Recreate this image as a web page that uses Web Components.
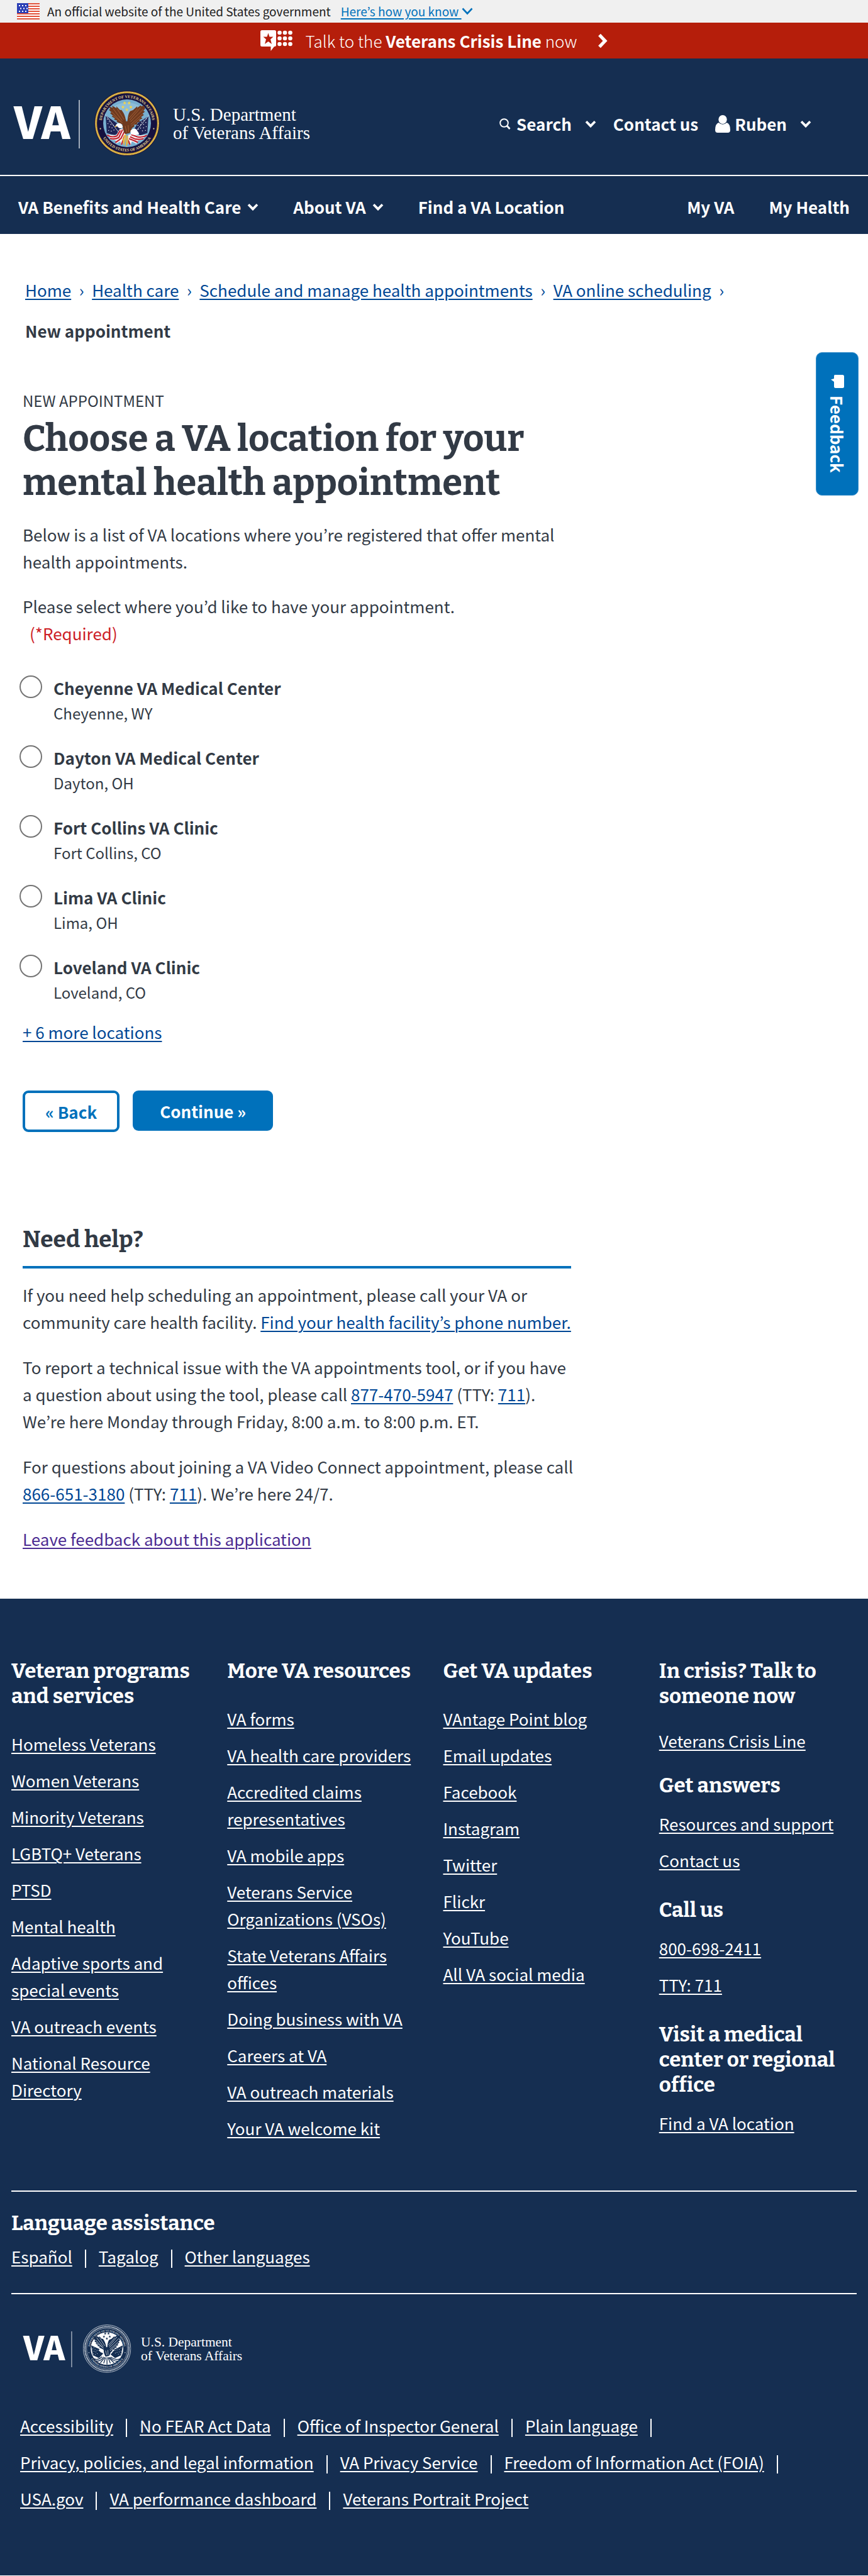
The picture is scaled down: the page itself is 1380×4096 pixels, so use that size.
<!DOCTYPE html>
<html lang="en">
<head>
<meta charset="utf-8">
<meta name="viewport" content="width=device-width, initial-scale=1">
<title>Choose a VA location for your mental health appointment</title>
<style>
  html { background: #fff; }
  body {
    margin: 0;
    --navy: #152e51;
    --blue: #0071bb;
    --link: #004795;
    --ink: #323a45;
    --serif: Bitter, "DejaVu Serif Condensed", "DejaVu Serif", serif;
    font-family: "Noto Sans CJK KR", "Noto Sans", sans-serif;
    font-size: 26px;
    line-height: 43px;
    color: var(--ink);
  }
</style>
</head>
<body>
<va-official-banner></va-official-banner>
<va-crisis-bar></va-crisis-bar>
<va-header></va-header>
<va-nav></va-nav>

<main>
  <va-breadcrumbs>
    <a href="#home">Home</a>
    <a href="#health-care">Health care</a>
    <a href="#schedule">Schedule and manage health appointments</a>
    <a href="#online">VA online scheduling</a>
    <strong>New appointment</strong>
  </va-breadcrumbs>

  <va-page>
    <va-title eyebrow="New appointment">Choose a VA location for your mental health appointment</va-title>
    <va-location-form></va-location-form>
    <va-need-help></va-need-help>
  </va-page>
</main>

<va-footer></va-footer>
<va-feedback></va-feedback>

<script>
const define = (name, html) => {
  const template = document.createElement('template');
  template.innerHTML = html;
  customElements.define(name, class extends HTMLElement {
    constructor() {
      super();
      this.attachShadow({ mode: 'open' }).append(template.content.cloneNode(true));
    }
    connectedCallback() {
      for (const name of this.getAttributeNames()) {
        const out = this.shadowRoot.querySelector(`[data-text="${name}"]`);
        if (out) out.textContent = this.getAttribute(name);
      }
    }
  });
};

const LINK = `
  a { color: inherit; text-decoration: underline; text-decoration-thickness: 2px; text-underline-offset: 3px; }
`;

/* ---------- icons ---------- */
define('va-chevron', `
<style>:host { display: inline-flex; } svg { width: 18px; height: 12px; }</style>
<svg viewBox="0 0 18 12" aria-hidden="true"><path d="M2 2.2 9 9.4 16 2.2" fill="none" stroke="currentColor" stroke-width="3.8"/></svg>
`);

/* ---------- logo: wordmark, rule and department seal ---------- */
const rope = (color, r, w, dash) =>
  `<circle cx="174" cy="174" r="${r}" fill="none" stroke="${color}" stroke-width="${w}" ${dash ? `stroke-dasharray="${dash}"` : ''}/>`;

const ringText = (fill, size, r) => `
  <path id="top" d="M${174 - r} 174 A${r} ${r} 0 0 1 ${174 + r} 174" fill="none"/>
  <path id="bottom" d="M${174 - r - 15} 174 A${r + 15} ${r + 15} 0 0 0 ${174 + r + 15} 174" fill="none"/>
  <g fill="${fill}" font-family="Liberation Serif, serif" font-weight="700" font-size="${size}" text-anchor="middle">
    <text><textPath href="#top" startOffset="50%">DEPARTMENT OF VETERANS AFFAIRS</textPath></text>
    <text><textPath href="#bottom" startOffset="50%">UNITED STATES OF AMERICA</textPath></text>
  </g>
  <circle cx="${174 - r - 7}" cy="203" r="3.5" fill="${fill}"/><circle cx="${174 + r + 7}" cy="203" r="3.5" fill="${fill}"/>`;

const star = (x, y, r) => {
  let p = '';
  for (let i = 0; i < 10; i++) {
    const a = -Math.PI / 2 + i * Math.PI / 5, q = i % 2 ? r * .42 : r;
    p += `${(x + q * Math.cos(a)).toFixed(1)},${(y + q * Math.sin(a)).toFixed(1)} `;
  }
  return `<polygon points="${p}"/>`;
};
const stars = [[161, 66], [185, 66], [152, 88], [194, 88], [173, 102]].map(s => star(s[0], s[1], 10)).join('');
const dots = pts => pts.map(p => `<circle cx="${p[0]}" cy="${p[1]}" r="2.4"/>`).join('');
const canton = dots([[70,152],[80,166],[72,176],[88,180],[80,194],[94,198],[102,186],[76,212],[90,216],[104,210],
  [276,150],[264,158],[252,168],[274,170],[262,180],[246,182],[276,192],[262,198],[246,200],[232,186],[272,212],[256,214],[234,206]]);

const wings = `
  <path d="M76 84 98 92 94 80 118 94 117 84 137 104 144 103C156 118 164 134 168 160L168 192 140 176 128 171 118 166 122 160 104 154 110 148 92 138 99 134 83 120 91 116 77 102 85 99Z"/>
  <path d="M264 80 248 84 248 78 228 92 228 84 206 104 190 110C180 124 178 142 176 162L176 206 198 202 214 190 210 182 232 180 226 172 246 164 238 157 256 148 248 141 264 130 256 124 269 112 261 108 270 96Z"/>
  <path d="M150 176C160 160 186 158 196 176 204 196 198 214 188 226L164 232C154 216 148 196 150 176Z"/>`;
const feathers = `
  <path d="M100 96 148 160M122 98 158 154M92 112 142 166M98 132 150 172M246 90 188 158M230 96 184 148M260 100 192 166M254 126 194 180M244 146 196 190M164 188 172 222M180 184 182 220"/>`;

const colourSeal = `
  <circle cx="174" cy="174" r="174" fill="#1b1a45"/>
  ${rope('#c79a2c', 165, 10)}${rope('#f7d878', 166, 5, '4 4')}
  <circle cx="174" cy="174" r="158" fill="#16113f"/>
  <circle cx="174" cy="174" r="127" fill="#78afd0"/>
  <ellipse cx="174" cy="110" rx="82" ry="46" fill="#a4cce0" opacity=".5"/>
  ${ringText('#e9d593', 21, 135)}
  <path d="M60 132 66 226 104 238 152 214 118 172Z" fill="#1f2456"/>
  <path d="M288 136 282 226 244 238 204 218 232 172Z" fill="#1f2456"/>
  <path d="M58 128 160 262M290 132 184 262" stroke="#d9dfe6" stroke-width="3"/>
  <g fill="#fff">${canton}</g>
  <path d="M66 232C88 240 98 232 116 238L134 206 156 202 168 226 162 262 144 292 138 270 118 282 112 264 92 262Z" fill="#f4f4f4"/>
  <path d="M282 232C262 242 250 234 232 240L200 230 180 236 178 262 192 292 200 270 224 284 232 266 254 262Z" fill="#f4f4f4"/>
  <g fill="none" stroke="#c2202e" stroke-width="7">
    <path d="M68 236Q92 252 120 242L138 212"/><path d="M84 254Q108 262 130 250L150 208"/><path d="M112 276Q132 264 142 254L160 218"/><path d="M144 288 160 242"/>
    <path d="M280 238Q256 252 228 246L196 234"/><path d="M262 256Q240 262 218 258L190 246"/><path d="M232 276Q214 266 184 256"/><path d="M190 288 180 264"/>
  </g>
  <g fill="#6f3a1f">${wings}</g>
  <g fill="none" stroke="#a9663a" stroke-width="3">${feathers}</g>
  <path d="M144 178C132 170 116 176 112 188L122 190C128 202 142 204 152 194Z" fill="#fff"/>
  <path d="M114 186 108 194 120 194Z" fill="#f1b93a"/>
  <path d="M192 214C204 202 216 200 222 206 230 218 236 222 238 232 222 240 206 236 194 232Z" fill="#fff"/>
  <path d="M160 236 158 290M166 234 172 296M152 252 156 280M176 240 178 284" stroke="#eab43c" stroke-width="6"/>
  <g fill="#f5d548">${stars}</g>`;

const whiteSeal = `
  ${rope('#c9d0da', 171, 4)}${rope('#e6eaef', 158, 10, '6 4')}${rope('#c9d0da', 147, 3)}
  ${ringText('#c9d0da', 19, 123)}
  <circle cx="174" cy="174" r="117" fill="#fff"/>
  <path d="M60 150 72 222 116 242 146 210 118 176ZM288 150 276 222 232 242 200 216 232 178Z" fill="#152e51"/>
  <path d="M78 122 150 196M272 124 196 202" stroke="#fff" stroke-width="12"/>
  <g fill="#fff">${canton}</g>
  <g fill="#152e51">${wings}</g>
  <g fill="none" stroke="#fff" stroke-width="3">${feathers}</g>
  <path d="M112 186 128 176 146 184 150 204 132 202 124 196Z" fill="#fff"/>
  <g fill="none" stroke="#152e51" stroke-width="6">
    <path d="M78 246Q110 262 138 232M96 262Q126 270 150 234M126 276 160 236M150 280 164 238M174 288V236M270 246Q238 262 202 234M252 264Q222 268 194 236M224 276 186 238M198 280 182 238"/>
  </g>
  <g fill="#152e51">${stars}</g>`;

for (const [name, seal] of [['va-logo', colourSeal], ['va-logo-white', whiteSeal]]) define(name, `
<style>:host { display: block; } a { display: block; color: #fff; } a > svg { display: block; width: 100%; overflow: visible; }</style>
<a href="#va" aria-label="VA, U.S. Department of Veterans Affairs">
<svg viewBox="0 0 476 105">
  <text x="0" y="77" fill="#fff" font-family="Noto Sans CJK KR, sans-serif" font-weight="900" font-size="70">VA</text>
  <path d="M104 15V92" stroke="#c5ccd6" stroke-width="1.6"/>
  <svg x="128" y="0" width="104" height="104" viewBox="0 0 348 348">${seal}</svg>
  <g fill="#fff" font-family="Liberation Serif, serif" font-weight="400" font-size="29">
    <text x="253" y="48">U.S. Department</text><text x="253" y="77">of Veterans Affairs</text>
  </g>
</svg></a>`);

/* ---------- top bars ---------- */
define('va-official-banner', `
<style>
  :host { display: flex; align-items: center; height: 36px; padding: 0 27px; background: #f0f0f0; color: #212121; font-size: 19px; line-height: 36px; }
  svg.flag { width: 36px; height: 26px; margin-right: 12px; }
  span { margin-right: 16px; }
  button { display: inline-flex; align-items: center; padding: 0; border: 0; background: none; color: var(--blue); font: inherit; }
  u { text-decoration-thickness: 2px; text-underline-offset: 3px; white-space: pre; }
  button svg { width: 18px; height: 12px; }
</style>
<svg class="flag" viewBox="0 0 36 26" role="img" aria-label="U.S. flag">
  <path fill="#fff" d="M0 0h36v26H0z"/>
  <path stroke="#e2523b" stroke-width="2" d="M0 1h36M0 5h36M0 9h36M0 13h36M0 17h36M0 21h36M0 25h36"/>
  <path fill="#2b3fb5" d="M0 0h18v16H0z"/>
  <path stroke="#fff" stroke-width="2" stroke-dasharray="2 3" d="M3 4h12M5 8.500h12M3 13h12"/>
</svg>
<span>An official website of the United States government</span>
<button type="button"><u>Here’s how you know </u><svg viewBox="0 0 18 12" aria-hidden="true"><path d="M1.500 1.500 9 9.500 16.500 1.500" fill="none" stroke="currentColor" stroke-width="2.600"/></svg></button>
`);

define('va-crisis-bar', `
<style>
  :host { display: block; background: #b51e0b; color: #fff; }
  button { display: flex; align-items: center; justify-content: center; width: 100%; height: 57px; padding: 0; border: 0; background: none; color: inherit; font: inherit; font-weight: 300; line-height: 57px; }
  b { font-weight: 700; }
  .badge { width: 51px; height: 33px; margin-right: 21px; }
  .arrow { width: 16px; height: 24px; margin-left: 33px; }
</style>
<button type="button">
  <svg class="badge" viewBox="0 0 51 33" aria-hidden="true">
    <path fill="#fff" d="M2.500 0H22.500Q25 0 25 2.500V23.500Q25 26 22.500 26H22L16.500 33V26H2.500Q0 26 0 23.500V2.500Q0 0 2.500 0Z"/>
    <path fill="#b51e0b" d="M12.500 4.500 14.500 10.500H20.500L16 14.500 18 22 12.500 18 7 22 9 14.500 4.500 10.500H10.500Z"/>
    <g fill="#fff"><circle cx="30.500" cy="4" r="3.300"/><circle cx="39" cy="4" r="3.300"/><circle cx="47.500" cy="4" r="3.300"/><circle cx="30.500" cy="13" r="3.300"/><circle cx="39" cy="13" r="3.300"/><circle cx="47.500" cy="13" r="3.300"/><circle cx="30.500" cy="22" r="3.300"/><circle cx="39" cy="22" r="3.300"/><circle cx="47.500" cy="22" r="3.300"/></g>
  </svg>
  <span>Talk to the <b>Veterans Crisis Line</b> now</span>
  <svg class="arrow" viewBox="0 0 16 24" aria-hidden="true"><path d="M3 2.500 12 12 3 21.500" fill="none" stroke="#fff" stroke-width="5.200"/></svg>
</button>
`);

define('va-header', `
<style>
  :host { display: flex; align-items: center; justify-content: space-between; padding: 51px 90px 29px 22px; background: var(--navy); color: #fff; border-bottom: 2px solid #fff; font-weight: 700; }
  va-logo { width: 476px; }
  div { display: flex; align-items: center; }
  button { display: flex; align-items: center; padding: 0; border: 0; background: none; color: inherit; font: inherit; }
  va-chevron { margin-left: 21px; }
  a { color: inherit; text-decoration: none; margin: 0 27px; }
  .search { width: 18px; height: 18px; margin-right: 9px; }
  .person { width: 24px; height: 28px; margin-right: 7px; }
</style>
<va-logo></va-logo>
<div>
  <button type="button"><svg class="search" viewBox="0 0 18 18" aria-hidden="true"><circle cx="7.500" cy="7.500" r="6.300" fill="none" stroke="#fff" stroke-width="2"/><path d="m12 12 4.500 5" stroke="#fff" stroke-width="2.800"/></svg>Search<va-chevron></va-chevron></button>
  <a href="#contact">Contact us</a>
  <button type="button"><svg class="person" viewBox="0 0 24 28" aria-hidden="true"><ellipse cx="12" cy="7" rx="6.700" ry="7" fill="#fff"/><path fill="#fff" d="M5.500 12Q12 17.500 18.500 12 24 14 24 23.500 24 28 20 28H4Q0 28 0 23.500 0 14 5.500 12Z"/></svg>Ruben<va-chevron></va-chevron></button>
</div>
`);

define('va-nav', `
<style>
  :host { display: block; background: var(--navy); color: #fff; font-weight: 700; }
  nav { display: flex; align-items: center; gap: 55px; padding: 27px 29px 22px; }
  button { display: flex; align-items: center; gap: 10px; padding: 0; border: 0; background: none; color: inherit; font: inherit; }
  a { color: inherit; text-decoration: none; }
  .my { margin-left: auto; }
</style>
<nav aria-label="Main">
  <button type="button">VA Benefits and Health Care<va-chevron></va-chevron></button>
  <button type="button">About VA<va-chevron></va-chevron></button>
  <a href="#find">Find a VA Location</a>
  <a class="my" href="#my-va">My VA</a>
  <a href="#my-health">My Health</a>
</nav>
`);

/* ---------- main column ---------- */
define('va-breadcrumbs', `
<style>
  :host { display: block; color: var(--link); }
  nav { display: flex; flex-wrap: wrap; row-gap: 22px; padding: 67px 36px 72px 40px; }
  ::slotted(a) { color: inherit; text-decoration: underline; text-decoration-thickness: 2px; text-underline-offset: 3px; }
  ::slotted(a)::after { content: "›"; display: inline-block; width: 33px; text-align: center; }
  ::slotted(strong) { color: var(--ink); }
</style>
<nav aria-label="Breadcrumb"><slot></slot></nav>
`);

define('va-page', `
<style>:host { display: block; max-width: 872px; padding: 0 36px 74px; }</style>
<slot></slot>
`);

define('va-title', `
<style>
  :host { display: block; }
  p { margin: 0 0 8px; font-size: 24px; line-height: 36px; text-transform: uppercase; }
  h1 { margin: 0 0 25px; font: 700 58px/70px var(--serif); }
</style>
<p data-text="eyebrow"></p>
<h1><slot></slot></h1>
`);

const locations = [
  ['Cheyenne VA Medical Center', 'Cheyenne, WY'],
  ['Dayton VA Medical Center', 'Dayton, OH'],
  ['Fort Collins VA Clinic', 'Fort Collins, CO'],
  ['Lima VA Clinic', 'Lima, OH'],
  ['Loveland VA Clinic', 'Loveland, CO']
];
define('va-location-form', `
<style>
  ${LINK}
  :host { display: block; }
  p { margin: 0 0 28px; }
  fieldset { margin: 0; padding: 0; border: 0; min-width: 0; }
  legend { padding: 0; margin-bottom: 46px; }
  .required { display: block; padding-left: 11px; color: #cd2026; }
  .options { display: grid; gap: 31px; margin-bottom: 21px; }
  .option { display: flex; gap: 18px; margin-left: -5px; }
  input { appearance: none; flex: none; width: 36px; height: 36px; margin: 0; border: 2px solid #757575; border-radius: 50%; background: #fff; }
  input:checked { background: var(--blue); box-shadow: inset 0 0 0 5px #fff; }
  label { font-size: 24px; line-height: 40px; }
  label b { display: block; font-size: 26px; }
  a { color: var(--link); }
  .actions { display: flex; align-items: flex-start; gap: 21px; margin: 72px 0 147px; }
  button { box-sizing: border-box; border: 0; border-radius: 9px; font: inherit; font-weight: 700; }
  .back { height: 66px; padding: 0 32px; border: 4px solid var(--blue); background: #fff; color: var(--blue); }
  .next { height: 64px; padding: 0 43px; background: var(--blue); color: #fff; }
</style>
<form>
  <p>Below is a list of VA locations where you’re registered that offer mental health appointments.</p>
  <fieldset>
    <legend>Please select where you’d like to have your appointment. <span class="required">(*Required)</span></legend>
    <div class="options">${locations.map(([name, city], i) => `
      <div class="option"><input type="radio" name="location" id="location-${i}"><label for="location-${i}"><b>${name}</b>${city}</label></div>`).join('')}
    </div>
  </fieldset>
  <a href="#more">+ 6 more locations</a>
  <div class="actions"><button class="back" type="button">« Back</button><button class="next" type="button">Continue »</button></div>
</form>
`);

define('va-need-help', `
<style>
  ${LINK}
  :host { display: block; }
  h2 { margin: 0 0 20px; padding-bottom: 18px; border-bottom: 4px solid var(--blue); font: 700 37px/48px var(--serif); }
  p { margin: 0 -8px 29px 0; }
  p:last-child { margin-bottom: 0; }
  a { color: var(--link); }
  a.visited { color: #4c2c92; }
</style>
<h2>Need help?</h2>
<p>If you need help scheduling an appointment, please call your VA or community care health facility. <a href="#phone">Find your health facility’s phone number.</a></p>
<p>To report a technical issue with the VA appointments tool, or if you have a question about using the tool, please call <a href="tel:8774705947">877-470-5947</a> (TTY: <a href="tel:711">711</a>). We’re here Monday through Friday, 8:00 a.m. to 8:00 p.m. ET.</p>
<p>For questions about joining a VA Video Connect appointment, please call <a href="tel:8666513180">866-651-3180</a> (TTY: <a href="tel:711">711</a>). We’re here 24/7.</p>
<p><a class="visited" href="#feedback">Leave feedback about this application</a></p>
`);

/* ---------- footer ---------- */
define('va-link-group', `
<style>
  :host { display: block; }
  h2 { margin: 0 0 var(--heading-gap, 34px); font: 700 33px/40px var(--serif); }
  div { display: grid; gap: 15px; justify-items: start; }
  ::slotted(a) { color: #fff; text-decoration: underline; text-decoration-thickness: 2px; text-underline-offset: 3px; }
</style>
<h2 data-text="heading"></h2>
<div><slot></slot></div>
`);

define('va-link-row', `
<style>
  :host { display: flex; flex-wrap: wrap; align-items: center; row-gap: 15px; }
  ::slotted(a) { color: #fff; text-decoration: underline; text-decoration-thickness: 2px; text-underline-offset: 3px; }
  ::slotted(i) { width: 2px; height: 29px; margin: 8px 20px 0; background: #fff; }
</style>
<slot></slot>
`);

const links = list => list.map(text => `<a href="#">${text}</a>`).join('');
const row = list => list.map(text => `<a href="#">${text}</a>`).join('<i></i>');
define('va-footer', `
<style>
  :host { display: block; padding: 95px 18px 101px; background: var(--navy); color: #fff; }
  .columns { display: grid; grid-template-columns: repeat(4, minmax(0, 1fr)); gap: 29px; margin-bottom: 78px; }
  .help { --heading-gap: 19px; display: grid; gap: 38px; align-content: start; }
  .crisis { display: grid; gap: 30px; }
  .crisis :first-child { --heading-gap: 29px; }
  .language { padding: 30px 0 37px; border: solid #fff; border-width: 2px 0; }
  h2 { margin: 0 0 11px; font: 700 33px/40px var(--serif); }
  va-logo-white { width: 352px; margin: 48px 19px 61px; }
  .legal { margin: 0 14px; }
</style>
<div class="columns">
  <va-link-group heading="Veteran programs and services">${links(['Homeless Veterans', 'Women Veterans', 'Minority Veterans', 'LGBTQ+ Veterans', 'PTSD', 'Mental health', 'Adaptive sports and special events', 'VA outreach events', 'National Resource Directory'])}</va-link-group>
  <va-link-group heading="More VA resources">${links(['VA forms', 'VA health care providers', 'Accredited claims representatives', 'VA mobile apps', 'Veterans Service Organizations (VSOs)', 'State Veterans Affairs offices', 'Doing business with VA', 'Careers at VA', 'VA outreach materials', 'Your VA welcome kit'])}</va-link-group>
  <va-link-group heading="Get VA updates">${links(['VAntage Point blog', 'Email updates', 'Facebook', 'Instagram', 'Twitter', 'Flickr', 'YouTube', 'All VA social media'])}</va-link-group>
  <div class="help">
    <div class="crisis">
      <va-link-group heading="In crisis? Talk to someone now">${links(['Veterans Crisis Line'])}</va-link-group>
      <va-link-group heading="Get answers">${links(['Resources and support', 'Contact us'])}</va-link-group>
    </div>
    <va-link-group heading="Call us">${links(['800-698-2411', 'TTY: 711'])}</va-link-group>
    <va-link-group heading="Visit a medical center or regional office">${links(['Find a VA location'])}</va-link-group>
  </div>
</div>
<div class="language">
  <h2>Language assistance</h2>
  <va-link-row>${row(['Español', 'Tagalog', 'Other languages'])}</va-link-row>
</div>
<va-logo-white></va-logo-white>
<va-link-row class="legal">${row(['Accessibility', 'No FEAR Act Data', 'Office of Inspector General', 'Plain language', 'Privacy, policies, and legal information', 'VA Privacy Service', 'Freedom of Information Act (FOIA)', 'USA.gov', 'VA performance dashboard', 'Veterans Portrait Project'])}</va-link-row>
`);

define('va-feedback', `
<style>
  :host { position: absolute; top: 560px; right: 15px; }
  button { display: flex; align-items: center; justify-content: center; gap: 12px; box-sizing: border-box; width: 68px; height: 228px; padding: 0; border: 1px solid #3c92cb; border-radius: 10px; background: var(--blue); color: #fff; font: inherit; font-weight: 700; writing-mode: vertical-rl; }
  svg { width: 21px; height: 21px; }
</style>
<button type="button"><svg viewBox="0 0 21 21" aria-hidden="true"><path fill="#fff" d="M6 0H18.500Q21 0 21 2.500V18.500Q21 21 18.500 21H7.500Q5 21 5 18.500V11L0 7.500 5 6V2.500Q5 0 6 0Z"/></svg>Feedback</button>
`);
</script>
</body>
</html>
